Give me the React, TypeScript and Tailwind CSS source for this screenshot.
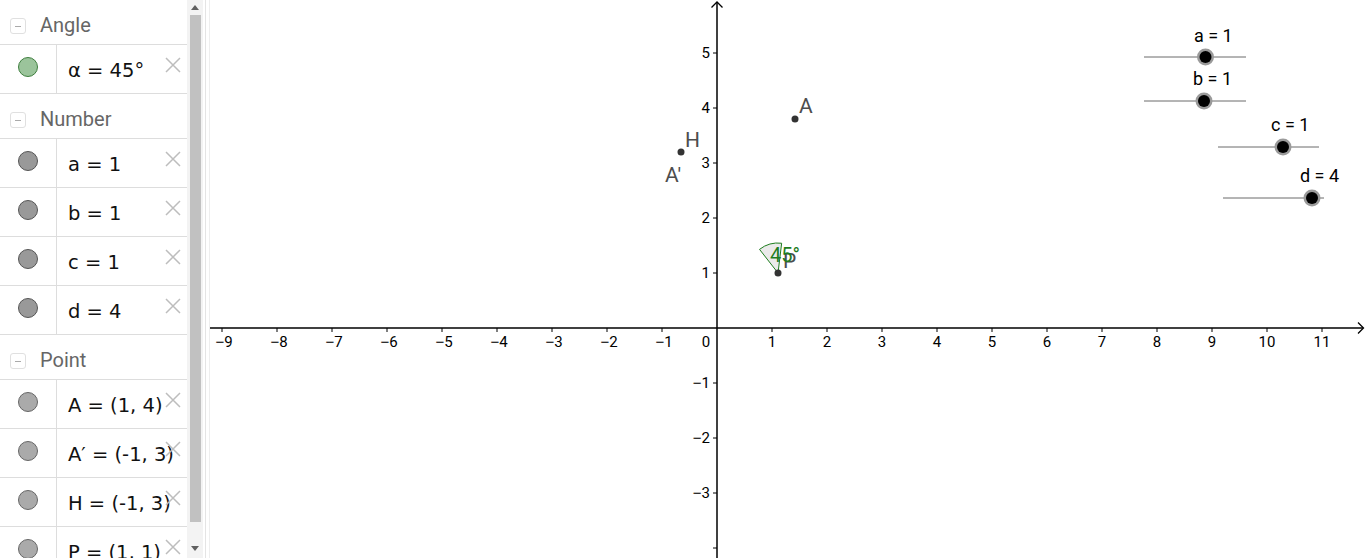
import React from "react";

type Kind = "angle" | "number" | "point";
type Item = { label: string; kind: Kind };

const groups: { name: string; items: Item[] }[] = [
  { name: "Angle", items: [{ label: "α = 45°", kind: "angle" }] },
  {
    name: "Number",
    items: ["a = 1", "b = 1", "c = 1", "d = 4"].map((l) => ({ label: l, kind: "number" as Kind })),
  },
  {
    name: "Point",
    items: ["A = (1, 4)", "A′ = (-1, 3)", "H = (-1, 3)", "P = (1, 1)"].map((l) => ({
      label: l,
      kind: "point" as Kind,
    })),
  },
];

const dotClass: Record<Kind, string> = {
  angle: "bg-[#9bc49b] border-[#3f7f3f]",
  number: "bg-[#999999] border-[#555555]",
  point: "bg-[#aaaaaa] border-[#666666]",
};

function Header({ name }: { name: string }) {
  return (
    <div className="h-[45px] shrink-0 border-b border-[#dddddd] flex items-start">
      <div className="mt-[18px] ml-[10px] w-[16px] h-[16px] border border-[#e0e0e0] rounded-[3px] flex items-center justify-center">
        <div className="w-[6px] h-[1px] bg-[#aaaaaa]" />
      </div>
      <span className="ml-[14px] pt-[13px] text-[20px] leading-[24px] text-[#666666] font-['Roboto',sans-serif]">
        {name}
      </span>
    </div>
  );
}

function Row({ item }: { item: Item }) {
  return (
    <div className="relative h-[49px] shrink-0 border-b border-[#dddddd] flex">
      <div className="w-[57px] shrink-0 border-r border-[#dddddd] flex justify-center pt-[12px]">
        <div className={"w-[20px] h-[20px] rounded-full border " + dotClass[item.kind]} />
      </div>
      <div className="pl-[11px] pt-[15px] text-[19.5px] leading-[22px] text-[#111111] whitespace-nowrap font-['DejaVu_Sans',sans-serif]">
        {item.label}
      </div>
      <svg className="absolute left-[165px] top-[12px]" width="16" height="16" viewBox="0 0 16 16">
        <path d="M1 1 L15 15 M15 1 L1 15" stroke="#bdbdbd" strokeWidth="1.5" fill="none" />
      </svg>
    </div>
  );
}

function Sidebar() {
  return (
    <div className="w-[187px] shrink-0 h-full overflow-hidden flex flex-col bg-white">
      {groups.map((g) => (
        <React.Fragment key={g.name}>
          <Header name={g.name} />
          {g.items.map((it) => (
            <Row key={it.label} item={it} />
          ))}
        </React.Fragment>
      ))}
    </div>
  );
}

function Scrollbar() {
  return (
    <div className="w-[16px] shrink-0 h-full bg-[#f3f3f3] flex flex-col items-center">
      <div className="h-[15px] w-full flex items-center justify-center">
        <div className="w-0 h-0 border-l-[4px] border-r-[4px] border-b-[5px] border-l-transparent border-r-transparent border-b-[#606060]" />
      </div>
      <div className="w-[11px] h-[507px] bg-[#c1c1c1]" />
      <div className="flex-1" />
      <div className="h-[20px] w-full flex items-center justify-center">
        <div className="w-0 h-0 border-l-[4px] border-r-[4px] border-t-[5px] border-l-transparent border-r-transparent border-t-[#606060]" />
      </div>
    </div>
  );
}

function Divider() {
  return (
    <div className="w-[7px] shrink-0 h-full bg-white flex">
      <div className="w-[2px]" />
      <div className="w-[1px] h-full bg-[#e4e4e4]" />
      <div className="w-[3px]" />
      <div className="w-[1px] h-full bg-[#eeeeee]" />
    </div>
  );
}

const OX = 717;
const OY = 328;
const U = 55;

function Num({ v }: { v: number }) {
  if (v < 0)
    return (
      <>
        <tspan fontFamily="'Liberation Sans', sans-serif">−</tspan>
        {String(-v)}
      </>
    );
  return <>{String(v)}</>;
}

function Graphics() {
  const xs: number[] = [];
  for (let i = -9; i <= 11; i++) if (i !== 0) xs.push(i);
  const ys: number[] = [];
  for (let j = -4; j <= 5; j++) if (j !== 0) ys.push(j);

  const sliders = [
    { label: "a = 1", x1: 1144, x2: 1246, y: 57, k: 1205.5, lx: 1194, ly: 42 },
    { label: "b = 1", x1: 1144, x2: 1246, y: 101, k: 1204, lx: 1193, ly: 85 },
    { label: "c = 1", x1: 1218, x2: 1319, y: 147, k: 1283, lx: 1271, ly: 131 },
    { label: "d = 4", x1: 1223, x2: 1324, y: 198, k: 1312, lx: 1300, ly: 182 },
  ];

  const a1 = (83 * Math.PI) / 180;
  const a2 = (128 * Math.PI) / 180;
  const px = 778;
  const py = 273;
  const r = 30;
  const sector = `M ${px} ${py} L ${px + r * Math.cos(a1)} ${py - r * Math.sin(a1)} A ${r} ${r} 0 0 0 ${
    px + r * Math.cos(a2)
  } ${py - r * Math.sin(a2)} Z`;

  return (
    <div className="flex-1 h-full bg-white overflow-hidden">
      <svg width="1156" height="558" viewBox="210 0 1156 558" className="block">
        <g fontFamily="Roboto, sans-serif">
          <line x1="210" y1={OY} x2="1363" y2={OY} stroke="#000" strokeWidth="1.5" />
          <polyline points={`1358,322.5 1363.5,328 1358,333.5`} fill="none" stroke="#000" strokeWidth="1.3" />
          <line x1={OX} y1="2" x2={OX} y2="558" stroke="#000" strokeWidth="1.5" />
          <polyline points={`711.5,7.5 717,2 722.5,7.5`} fill="none" stroke="#000" strokeWidth="1.3" />

          {xs.map((i) => {
            const x = OX + i * U;
            return (
              <g key={"x" + i}>
                <line x1={x} y1={OY} x2={x} y2={OY + 4} stroke="#000" strokeWidth="1" />
                <text x={i < 0 ? x + 2 : x} y={347} fontSize="15" textAnchor="middle" fill="#000">
                  <Num v={i} />
                </text>
              </g>
            );
          })}
          <text x={706} y={347} fontSize="15" textAnchor="middle" fill="#000">
            0
          </text>
          {ys.map((j) => {
            const y = OY - j * U;
            return (
              <g key={"y" + j}>
                <line x1={OX - 4} y1={y} x2={OX} y2={y} stroke="#000" strokeWidth="1" />
                {j !== -4 && (
                  <text x={710} y={y + 5} fontSize="15" textAnchor="end" fill="#000">
                    <Num v={j} />
                  </text>
                )}
              </g>
            );
          })}

          <path d={sector} fill="#d9d9d9" fillOpacity="0.55" stroke="#1e7d1e" strokeWidth="1" />

          <circle cx="795" cy="119" r="3.5" fill="#333" />
          <text x="799" y="113" fontSize="21" fill="#4d4d4d">
            A
          </text>
          <circle cx="681" cy="152" r="3.5" fill="#333" />
          <text x="685" y="147" fontSize="21" fill="#4d4d4d">
            H
          </text>
          <text x="665" y="182" fontSize="21" fill="#4d4d4d">
            A′
          </text>
          <circle cx="778" cy="273" r="3.5" fill="#333" />
          <text x="783" y="268" fontSize="21" fill="#4d4d4d">
            P
          </text>
          <text x="770" y="262" fontSize="20" fill="#1e7d1e">
            45°
          </text>

          {sliders.map((s) => (
            <g key={s.label}>
              <line x1={s.x1} y1={s.y} x2={s.x2} y2={s.y} stroke="#6b6b6b" strokeWidth="1" />
              <circle cx={s.k} cy={s.y} r="8.5" fill="#9a9a9a" />
              <circle cx={s.k} cy={s.y} r="6" fill="#000" />
              <text x={s.lx} y={s.ly} fontSize="18" fill="#000">
                {s.label}
              </text>
            </g>
          ))}
        </g>
      </svg>
    </div>
  );
}

export default function App() {
  return (
    <div className="w-[1366px] h-[558px] flex bg-white overflow-hidden">
      <Sidebar />
      <Scrollbar />
      <Divider />
      <Graphics />
    </div>
  );
}
